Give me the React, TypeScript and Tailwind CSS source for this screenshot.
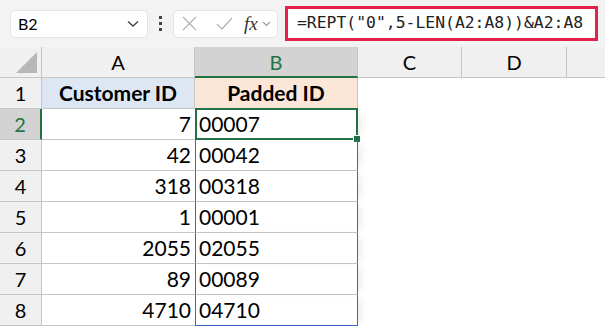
import React from "react";

const rows = [
  { n: 2, id: "7", pad: "00007" },
  { n: 3, id: "42", pad: "00042" },
  { n: 4, id: "318", pad: "00318" },
  { n: 5, id: "1", pad: "00001" },
  { n: 6, id: "2055", pad: "02055" },
  { n: 7, id: "89", pad: "00089" },
  { n: 8, id: "4710", pad: "04710" },
];

export default function App() {
  return (
    <div
      className="w-[605px] h-[327px] overflow-hidden bg-white text-black"
      style={{ fontFamily: "Lato, 'Noto Sans', sans-serif" }}
    >
      {RenderToolbar()}
      {RenderGrid()}
    </div>
  );

  function RenderToolbar() {
    return (
      <div className="flex items-center h-[47px] bg-[#f3f3f3] pl-[10px]">
        <div className="flex items-center justify-between w-[138px] h-[28px] bg-white rounded-[5px] border border-[#e3e3e3] pl-[7px] pr-[8px] text-[16px]">
          <span>B2</span>
          <svg width="12" height="8" viewBox="0 0 12 8" fill="none" stroke="#444" strokeWidth="1.4">
            <path d="M1 1.5 L6 6 L11 1.5" />
          </svg>
        </div>
        <div className="flex flex-col gap-[3px] mx-[11px]">
          <span className="w-[3px] h-[3px] bg-[#444]" />
          <span className="w-[3px] h-[3px] bg-[#444]" />
          <span className="w-[3px] h-[3px] bg-[#444]" />
        </div>
        <div className="flex items-center w-[105px] h-[28px] bg-white rounded-[5px] border border-[#e3e3e3] pl-[8px]">
          <svg width="15" height="15" viewBox="0 0 15 15" stroke="#b3b3b3" strokeWidth="1.3">
            <path d="M1 1 L14 14 M14 1 L1 14" />
          </svg>
          <svg className="ml-[19px]" width="17" height="13" viewBox="0 0 17 13" fill="none" stroke="#b3b3b3" strokeWidth="1.3">
            <path d="M1 7 L6 12 L16 1" />
          </svg>
          <span
            className="ml-[11px] text-[19px] italic leading-none text-[#333]"
            style={{ fontFamily: "'Liberation Serif', serif" }}
          >
            fx
          </span>
          <svg className="ml-[4px]" width="9" height="6" viewBox="0 0 9 6" fill="none" stroke="#999" strokeWidth="1.1">
            <path d="M1 1 L4.5 4.5 L8 1" />
          </svg>
        </div>
        <div className="flex items-center ml-[7px] w-[313px] h-[35px] bg-white border-[3px] border-[#e3224c] pl-[9px]">
          <span
            className="text-[16.4px] text-[#222]"
            style={{ fontFamily: "'DejaVu Sans Mono', 'Liberation Mono', monospace" }}
          >
            =REPT("0",5-LEN(A2:A8))&amp;A2:A8
          </span>
        </div>
      </div>
    );
  }

  function RenderGrid() {
    const hdr = "flex items-center justify-center border-r border-b border-[#c6c6c6] bg-[#f0f0f0] text-[20px]";
    return (
      <div className="grid grid-cols-[42px_153px_163px_104px_105px_38px] grid-rows-[31px_repeat(8,31px)]">
        <div className="flex items-end justify-end border-r border-b border-[#c6c6c6] bg-[#f0f0f0] pr-[4px] pb-[4px]">
          <svg width="21" height="21" viewBox="0 0 21 21">
            <path d="M21 0 L21 21 L0 21 Z" fill="#b7b7b7" />
          </svg>
        </div>
        <div className={hdr}>A</div>
        <div className="flex items-center justify-center border-r border-[#c6c6c6] border-b-2 border-b-[#217346] bg-[#d3d3d3] text-[20px] text-[#217346]">
          B
        </div>
        <div className={hdr}>C</div>
        <div className={hdr}>D</div>
        <div className="border-b border-[#c6c6c6] bg-[#f0f0f0]" />

        <div className={hdr}>1</div>
        <div className="flex items-center justify-center border-r border-b border-[#c6c6c6] bg-[#dde7f3] text-[21px] font-bold">
          Customer ID
        </div>
        <div className="flex items-center justify-center border-r border-b border-[#c6c6c6] bg-[#fbe6d7] text-[21px] font-bold">
          Padded ID
        </div>
        <div className="col-span-3 bg-white" />

        {rows.map((r, i) => {
          const last = i === rows.length - 1;
          const active = r.n === 2;
          return (
            <React.Fragment key={r.n}>
              <div
                className={`flex items-center justify-center border-b border-[#c6c6c6] text-[20px] ${
                  active
                    ? "bg-[#d3d3d3] text-[#217346] border-r-2 border-r-[#217346]"
                    : "bg-[#f0f0f0] border-r"
                }`}
              >
                {r.n}
              </div>
              <div className="flex items-center justify-end border-b border-[#c6c6c6] pr-[4px] text-[21px]">
                {r.id}
              </div>
              <div
                className={`relative flex items-center border-x border-x-[#3a67c4] pl-[3px] text-[21px] shadow-[6px_0_8px_-4px_rgba(0,0,0,0.1)] ${
                  last ? "border-b border-b-[#3a67c4]" : "border-b border-b-[#c6c6c6]"
                }`}
              >
                {r.pad}
                {active && (
                  <div className="absolute -left-[1px] -top-[1px] -right-[1px] -bottom-[1px] border-2 border-[#217346]">
                    <div className="absolute -right-[4px] -bottom-[4px] w-[6px] h-[6px] bg-[#217346] outline outline-1 outline-white" />
                  </div>
                )}
              </div>
              <div className="col-span-3 bg-white" />
            </React.Fragment>
          );
        })}
      </div>
    );
  }
}
